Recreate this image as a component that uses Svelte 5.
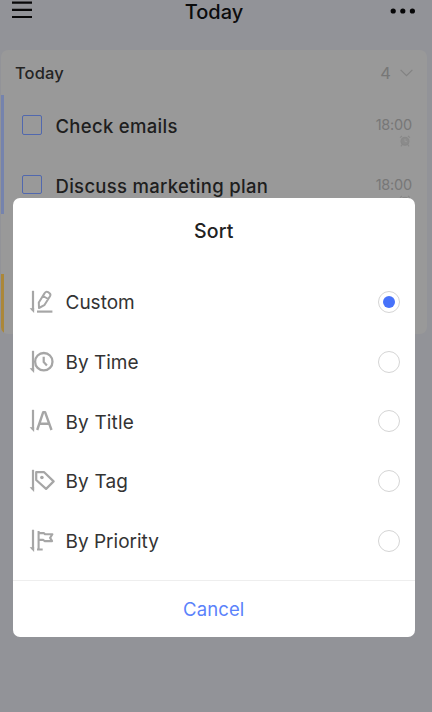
<script>
  const tasks = [
    { title: 'Check emails', time: '18:00', spacing: 0.3 },
    { title: 'Discuss marketing plan', time: '18:00', spacing: 0.3 }
  ];
  const options = [
    { id: 'custom', label: 'Custom' },
    { id: 'time', label: 'By Time' },
    { id: 'title', label: 'By Title' },
    { id: 'tag', label: 'By Tag' },
    { id: 'priority', label: 'By Priority' }
  ];
  let selected = $state('custom');
</script>

<div class="screen">
  <header>
    <svg class="menu" width="20" height="18" viewBox="0 0 20 18"><path d="M0 1.6h20M0 8.8h20M0 16h20" stroke="#080809" stroke-width="2.2" /></svg>
    <h1>Today</h1>
    <svg class="more" width="26" height="6" viewBox="0 0 26 6" fill="#060607"><circle cx="3.2" cy="3" r="2.6" /><circle cx="12.8" cy="3" r="2.6" /><circle cx="22.4" cy="3" r="2.6" /></svg>
  </header>

  <section class="list">
    <div class="group">
      <h2>Today</h2>
      <span class="count">4</span>
      <svg width="13" height="8" viewBox="0 0 13 8" fill="none" stroke="#828282" stroke-width="1.2"><path d="M.6 .8l5.9 5.9L12.4 .8" /></svg>
    </div>
    {#each tasks as task}
      <div class="task">
        <span class="box"></span>
        <span class="name" style="letter-spacing: {task.spacing}px">{task.title}</span>
        <div class="due">
          <span>{task.time}</span>
          <svg width="12" height="12" viewBox="0 0 12 12" fill="none" stroke="#888" stroke-width="1.2"><circle cx="6" cy="6.3" r="3.9" fill="#8b8b8b" /><path d="M1 2.6L3 1M11 2.6L9 1M3.2 9.5L2 11.4M8.8 9.5l1.2 1.9" /><path d="M6 4v2.6h2" stroke="#999" stroke-width=".9" /></svg>
        </div>
      </div>
    {/each}
    <div class="task last"></div>
    <div class="task amber"></div>
  </section>

  <div class="dialog">
    <div class="heading">Sort</div>
    <div class="options">
      {#each options as option}
        <button class="option" onclick={() => (selected = option.id)}>
          <svg class="icon" width="26" height="24" viewBox="0 0 26 24" fill="none" stroke="#a6a6a6" stroke-width="2" stroke-linejoin="round">
            <path d="M4 .8V21" stroke-width="2.2" />
            <path d="M.6 18.3L5.1 18v5z" fill="#a6a6a6" stroke="none" />
            {#if option.id === 'custom'}
              <path d="M8 21.6h15.4" stroke-width="2.2" />
              <path d="M15.5 3.4q1.4-2.5 3.6-1.2l1 .6q2.1 1.3.9 3.4L15.3 15.2 10 18l-.2-5.5zM14 6l5.2 3" />
            {:else if option.id === 'time'}
              <circle cx="14.8" cy="11.7" r="8.7" stroke-width="2.3" />
              <path d="M14.7 6.7V12l3.2 3.4" stroke-width="2.2" />
            {:else if option.id === 'title'}
              <path d="M8.2 21L14.2 3.1h1.9L22.5 21M10.4 14.7h9.6" stroke-width="2.4" />
            {:else if option.id === 'tag'}
              <path d="M7.2 3.2h8l9.4 9.2-7.5 7.5L7.2 11z" stroke-width="2.2" />
              <circle cx="12.9" cy="8.5" r="1.8" fill="#a6a6a6" stroke="none" />
            {:else}
              <path d="M9.6 2V20.3M8 20.5h5.7M9.6 4.1h5.2l1.2 1.2h7.4l-2.3 3.6 2 3.2h-7.5l-1.3-1.2H9.6" stroke-width="2.1" />
            {/if}
          </svg>
          <span class="label {option.id}">{option.label}</span>
          <span class="radio" class:on={selected === option.id}></span>
        </button>
      {/each}
    </div>
    <button class="cancel"><span>Cancel</span></button>
  </div>
</div>

<style>
  :global(body) { margin: 0; }
  .screen {
    position: relative;
    box-sizing: border-box;
    width: 432px;
    height: 712px;
    overflow: hidden;
    background: #929398;
    font-family: Inter, "Liberation Sans", sans-serif;
  }
  header {
    display: grid;
    grid-template-columns: 1fr auto 1fr;
    align-items: start;
    height: 24px;
    padding: 0 16px 0 12px;
    margin-bottom: 26px;
  }
  .menu { margin-top: 1.4px; }
  .more { justify-self: end; margin-top: 7.6px; }
  h1 {
    margin: 0;
    font-size: 20px;
    line-height: 24px;
    font-weight: 500;
    letter-spacing: 0;
    color: #0c0c0d;
  }
  .list {
    width: 426px;
    height: 284px;
    margin-left: 1px;
    overflow: hidden;
    border-radius: 7px;
    background: #999;
  }
  .group {
    display: flex;
    align-items: center;
    height: 45px;
    padding: 0 14px;
  }
  h2 {
    flex: 1;
    margin: 0;
    font-size: 16.5px;
    font-weight: 500;
    letter-spacing: .1px;
    color: #242424;
  }
  .count { margin-right: 9px; font-size: 16.5px; color: #777; }
  .task {
    display: flex;
    box-sizing: border-box;
    height: 59.7px;
    padding: 20px 15px 0 18px;
    border-left: 3px solid #7583ad;
  }
  .last { border-color: transparent; }
  .amber { border-color: #ab8739; }
  .box {
    box-sizing: border-box;
    width: 19.5px;
    height: 19.5px;
    border: 1.8px solid #5168ae;
    border-radius: 2px;
  }
  .name {
    flex: 1;
    margin-left: 14px;
    font-size: 18.5px;
    line-height: 22px;
    font-weight: 500;
    white-space: nowrap;
    color: #1e1e1e;
  }
  .due {
    display: flex;
    flex-direction: column;
    align-items: flex-end;
    font-size: 14.5px;
    line-height: 19px;
    letter-spacing: -.2px;
    color: #777;
  }
  .due svg { margin: 1px 1px 0 0; }
  .dialog {
    position: absolute;
    left: 13px;
    top: 198px;
    display: flex;
    flex-direction: column;
    width: 401.5px;
    height: 439px;
    border-radius: 7px;
    background: #fff;
    overflow: hidden;
  }
  .heading {
    height: 74px;
    font-size: 19.5px;
    line-height: 66px;
    font-weight: 500;
    text-align: center;
    letter-spacing: .1px;
    color: #222;
  }
  .options { flex: 1; }
  button { border: 0; background: none; font-family: inherit; }
  .option {
    display: flex;
    align-items: center;
    width: 100%;
    height: 59.7px;
    padding: 0 14.5px 0 16px;
    text-align: left;
  }
  .label {
    flex: 1;
    margin-left: 10.5px;
    padding-top: 2px;
    font-size: 19px;
    letter-spacing: 0;
    color: #333;
  }
  .radio {
    display: grid;
    place-items: center;
    box-sizing: border-box;
    width: 22px;
    height: 22px;
    border: 1.4px solid #d5d5d5;
    border-radius: 50%;
  }
  .title, .tag { letter-spacing: .15px; }
  .radio.on::after {
    content: "";
    width: 12px;
    height: 12px;
    border-radius: 50%;
    background: #4772fa;
  }
  .cancel {
    box-sizing: border-box;
    height: 57px;
    padding: 0;
    border-top: 1px solid #eee;
    font-size: 18.5px;
    letter-spacing: .1px;
    color: #5b82fb;
  }
</style>
